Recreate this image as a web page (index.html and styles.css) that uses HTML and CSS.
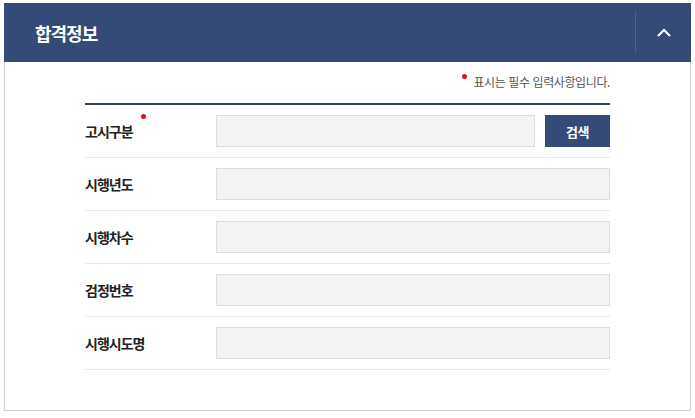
FILE: index.html
```html
<!DOCTYPE html>
<html lang="ko">
<head>
<meta charset="utf-8">
<title>합격정보</title>
<link rel="stylesheet" href="styles.css">
</head>
<body>
<div class="page">
  <section class="panel">
    <header class="panel-head">
      <h2 class="panel-title">합격정보</h2>
      <button class="toggle" type="button" aria-label="접기">
        <svg width="14" height="9" viewBox="0 0 14 9"><path d="M1 8 L7 2 L13 8" fill="none" stroke="#fff" stroke-width="2"/></svg>
      </button>
    </header>
    <div class="panel-body">
      <p class="notice"><span class="req"></span>표시는 필수 입력사항입니다.</p>
      <div class="form">
        <div class="row">
          <div class="label">고시구분<span class="req req-label"></span></div>
          <div class="field">
            <input class="input" type="text">
            <button class="btn" type="button">검색</button>
          </div>
        </div>
        <div class="row">
          <div class="label">시행년도</div>
          <div class="field"><input class="input" type="text"></div>
        </div>
        <div class="row">
          <div class="label">시행차수</div>
          <div class="field"><input class="input" type="text"></div>
        </div>
        <div class="row">
          <div class="label">검정번호</div>
          <div class="field"><input class="input" type="text"></div>
        </div>
        <div class="row">
          <div class="label">시행시도명</div>
          <div class="field"><input class="input" type="text"></div>
        </div>
      </div>
    </div>
  </section>
</div>
</body>
</html>
```

FILE: styles.css
```css
* { box-sizing: border-box; }
html, body { margin: 0; padding: 0; background: #fff; }
body {
  font-family: "Noto Sans CJK KR", "Noto Sans", sans-serif;
  color: #222;
}
.page { padding: 3px 4px 0 4px; }
.panel { width: 687px; }
.panel-head {
  height: 59px;
  background: #344b78;
  display: flex;
  align-items: center;
  justify-content: space-between;
}
.panel-title {
  margin: 0 0 0 31px;
  font-size: 18px;
  font-weight: 700;
  line-height: 24px;
  letter-spacing: -1px;
  color: #fff;
}
.toggle {
  width: 56px;
  height: 41px;
  border: 0;
  border-left: 1px solid rgba(255,255,255,0.14);
  background: transparent;
  padding: 0;
  display: flex;
  align-items: center;
  justify-content: center;
  cursor: pointer;
}
.toggle svg { display: block; margin-top: -1px; }
.panel-body {
  border: 1px solid #cfcfcf;
  border-top: 0;
  padding: 0 80px 40px 80px;
}
.notice {
  margin: 0;
  height: 41px;
  padding-top: 11px;
  text-align: right;
  font-size: 12px;
  line-height: 18px;
  letter-spacing: -0.4px;
  color: #555;
}
.req {
  display: inline-block;
  width: 5px;
  height: 5px;
  border-radius: 50%;
  background: #d7141c;
  vertical-align: top;
  margin: 1px 6px 0 0;
}
.form { border-top: 2px solid #34435f; }
.row {
  display: flex;
  align-items: center;
  padding: 10px 0;
  border-bottom: 1px solid #e8e8e8;
}
.label {
  width: 131px;
  font-size: 14px;
  font-weight: 700;
  letter-spacing: -1px;
  line-height: 20px;
  color: #222;
  position: relative;
}
.req-label {
  position: absolute;
  margin: 0;
  top: -7px;
  left: 56px;
}
.field {
  flex: 1;
  display: flex;
  gap: 10px;
}
.input {
  flex: 1;
  height: 32px;
  border: 1px solid #dcdcdc;
  background: #f3f3f3;
  margin: 0;
  padding: 0 8px;
  font: inherit;
}
.btn {
  width: 65px;
  height: 32px;
  border: 0;
  background: #344b78;
  color: #fff;
  font-family: inherit;
  font-size: 13px;
  font-weight: 700;
  letter-spacing: -0.5px;
  padding: 0;
}
```
